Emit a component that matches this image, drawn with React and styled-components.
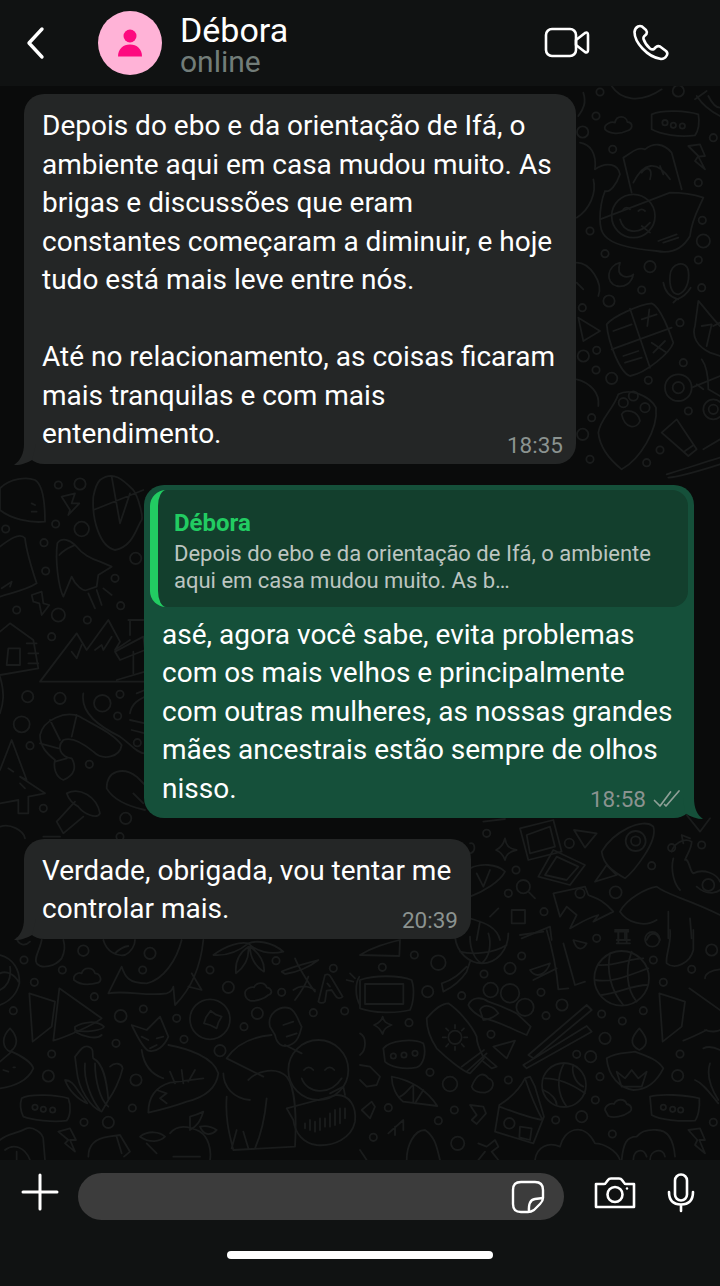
import React from 'react';
import styled, { createGlobalStyle } from 'styled-components';

const GlobalStyle = createGlobalStyle`
  html, body { margin: 0; padding: 0; background: #0a0b0b; }
  body { font-family: Roboto, "Liberation Sans", sans-serif; }
`;

// Wallpaper patches, drawn at 3x and scaled down: [left, top, shapes, dots]
const patches = [
  [0, 930, [
    'M0 75 C40 85 60 120 58 160 C50 195 25 215 0 225 M0 130 C20 120 45 135 55 155 M0 180 C20 170 35 150 30 110',
    'M125 30 C120 60 100 85 110 100 C125 118 165 110 185 85 C195 65 195 45 190 30',
    'M310 30 C320 65 350 80 375 75 C395 65 405 45 405 30 M345 70 C355 60 370 50 385 48 M50 25 C55 45 75 50 90 35',
    'M222 150 C218 135 235 125 245 130 C250 110 280 110 285 130 C300 130 308 150 295 158 C270 165 240 165 222 150 Z',
    'M735 190 C735 175 755 170 762 172 C770 155 795 155 800 172 C815 175 820 190 805 195 C795 205 770 215 750 212 C740 208 735 200 735 190 Z',
    'M325 190 L365 110 C375 140 385 160 440 160 C490 150 530 90 545 30 M325 190 C380 180 440 200 500 190 C515 185 520 170 520 170 L525 225 C560 190 600 130 610 30 M575 130 L605 180 L565 170',
    'M640 75 C680 45 720 35 745 40 C715 65 680 78 640 75 Z M745 40 C770 30 815 35 850 65 C810 75 770 65 745 40 Z M745 50 C715 70 705 100 708 130 C735 110 748 80 745 50 Z M750 50 C780 70 795 100 792 125 C765 110 750 80 750 50 Z',
    'M845 125 C875 110 920 100 955 90 C930 110 890 128 855 132 Z M885 85 C895 110 925 160 945 185 M880 180 C900 165 920 165 945 180 M885 210 C900 190 915 170 925 140',
    'M955 215 L975 135 C985 130 990 135 995 145 L1028 200 C1020 208 1010 205 1005 195 L995 180 L980 182 L975 215 C970 220 960 220 955 215 Z M982 160 L990 170',
    'M1040 150 L1060 155 M1050 130 L1065 145 M1078 140 C1065 160 1065 200 1080 225',
    'M88 190 L165 215 L155 290 L98 335 Z M178 175 L305 265 C280 285 200 320 160 332 Z',
    'M225 290 C250 275 290 270 312 290 C310 300 250 310 225 300 Z M225 305 C250 320 290 330 305 315',
    'M632 242 L648 254 L665 260 L655 278 L650 295 L630 285 L612 280 L618 262 Z',
    'M395 285 L440 300 L480 260 L505 320 C495 345 470 370 445 362 C425 350 410 315 395 285 Z M425 320 L445 330 M470 325 L490 320 M450 355 L470 345 M425 360 C430 395 445 430 490 445 M505 345 C560 355 640 380 655 430 C650 470 620 500 560 515 C520 530 480 540 445 548 C445 500 470 470 510 458 L610 445 M510 425 L525 460 M545 420 L550 460 M585 420 L565 455 M470 480 L500 490 L480 505 L500 520',
    'M225 380 C235 370 245 345 265 350 C285 355 275 375 280 385 C310 400 320 450 325 510 L305 545 C275 535 235 480 230 420 Z M255 400 C250 450 275 510 300 540 M285 400 C285 450 300 510 325 530 M195 450 C215 450 225 470 240 490 L262 520 C235 510 205 480 195 450 Z M330 410 C345 395 365 400 368 415 C360 450 340 490 325 510',
    'M65 505 C90 490 170 495 205 505 C215 530 210 560 200 572 C160 578 95 570 70 560 C60 540 60 520 65 505 Z',
    'M30 295 C50 315 60 345 30 365 C10 355 0 325 30 295 Z M0 395 L35 365 C70 380 95 400 100 415 C85 450 45 470 0 475 M10 420 L25 425 M40 412 h5',
    'M0 630 C25 610 40 615 80 595 C95 590 130 605 130 630 L135 690 M15 660 C40 640 75 650 90 690 M50 665 v25',
    'M175 605 L210 595 L228 630 L210 630 L225 665 L195 640 L205 630 Z',
    'M265 680 C265 640 290 625 325 620 L360 615 L390 665 L372 680 M350 620 L365 670',
    'M420 620 C445 600 480 605 495 620 C480 635 450 640 420 620 Z M440 640 L470 670 M510 610 C530 585 560 585 600 605 C625 620 635 660 630 690 M570 560 C590 555 600 550 610 545 C600 575 590 590 570 600 Z M600 590 C620 585 635 590 650 600 C630 620 610 615 600 590 Z M520 680 H600',
    'M810 290 C800 250 840 225 870 235 C890 245 895 275 905 290 C900 310 895 335 870 345 C845 355 830 340 825 315 Z M850 285 L880 275 M860 320 L890 310 M680 385 C710 340 760 320 815 315 M855 345 L905 370 M680 385 L790 440 M670 430 C670 470 700 505 750 510 M745 450 C775 420 830 410 860 440 C885 470 890 560 885 650 L700 660 C690 620 675 570 680 500 M800 505 C795 560 780 620 765 655 M710 600 L695 655 M730 605 L745 655',
    'M912 420 q14 -16 28 0 M975 420 q14 -16 28 0 M905 445 C920 490 990 500 1025 445 M990 490 L1030 470 L1035 495',
    'M860 535 L1010 495 C1050 495 1070 530 1065 575 C1055 625 1000 650 950 645 C910 640 885 610 880 570 Z',
    'M915 580 V595 M930 570 V600 M945 575 V605 M960 565 V600 M975 565 V590 M990 550 V590 M1005 540 V585 M1020 535 V580 M1035 535 V565',
  ], [
    [250, 62, 16], [72, 90, 11], [187, 120, 11], [103, 157, 11], [283, 200, 11], [40, 242, 11], [362, 258, 18], [430, 237, 11],
    [530, 265, 11], [552, 328, 11], [348, 340, 11], [155, 372, 11], [145, 438, 17], [408, 450, 17], [397, 534, 11], [252, 577, 11],
    [325, 577, 17], [660, 362, 17], [450, 70, 17], [428, 120, 11], [630, 120, 11], [685, 172, 17], [772, 250, 17], [732, 290, 11],
    [845, 187, 11], [828, 92, 11], [940, 248, 11], [1034, 243, 11], [1000, 115, 11], [630, 268, 60], [955, 420, 90],
    [105, 532, 8], [130, 538, 8], [158, 540, 8],
  ]],
  [360, 930, [
    'M0 75 C40 50 80 40 120 30 L118 78 Z',
    'M285 20 C290 70 330 100 365 100 C410 100 445 60 445 10 M330 20 C330 60 345 90 365 100 M385 10 C395 40 390 80 365 100 M300 65 C340 75 400 70 440 45 M330 95 L320 125 C300 155 280 170 250 185 L245 160 C280 150 300 130 320 110',
    'M0 150 C40 135 120 135 155 150 C165 180 160 220 150 240 C110 250 40 250 0 235 Z M15 162 H130 V222 H15 Z',
    'M200 265 C225 235 250 220 265 220 C295 240 335 285 350 320 C350 345 365 370 372 385 L330 430 C310 425 260 385 230 355 C210 325 200 295 200 265 Z M305 410 L372 360 M320 425 L380 370 M375 380 L410 410 L395 415 L370 395',
    'M285 285 V295 M285 350 V360 M248 322 H258 M312 322 H322 M258 295 L265 302 M305 342 L312 350 M312 295 L305 302 M265 342 L258 350',
    'M325 225 C335 200 365 200 385 215 C415 225 440 235 470 250 L512 290 L500 315 C460 300 410 270 370 265 C345 250 330 240 325 225 Z M360 240 C370 220 400 225 415 250 C400 262 380 270 370 270 Z',
    'M505 375 L680 225 L695 240 L520 385 Z M490 405 L680 288 L695 305 L500 415 Z',
    'M560 0 C575 50 590 120 595 178 L625 175 M610 40 L645 165 L675 155 M640 30 L680 40 C670 60 650 65 640 30 Z M510 120 L570 100 C560 130 530 150 510 120 Z M520 150 L590 115 M480 15 L550 5',
    'M715 105 C760 110 810 85 850 85 M705 150 C760 160 820 130 865 115 M725 195 C770 190 820 165 862 165 M750 70 C740 120 750 180 790 225 M815 65 C795 120 800 180 830 215',
    'M838 295 C860 320 870 345 838 360 C805 345 815 320 838 295 Z M740 385 C770 365 800 370 825 365 C850 375 890 385 910 415 C890 455 860 480 820 480 C780 475 745 440 740 385 Z M770 425 L795 445 L815 420 L835 445 L860 425 L845 470 H785 Z',
    'M898 190 L975 215 L965 290 L908 335 Z M988 175 L1080 240 M1035 300 C1060 310 1080 300 1080 300 M970 332 C1000 320 1020 310 1040 300',
    'M1030 355 C1050 345 1070 355 1080 360 M1050 400 C1040 430 1050 470 1075 510 M1005 450 C1030 460 1050 490 1075 520',
    'M555 445 C600 445 640 465 675 490 M612 400 C590 440 590 490 620 530 M550 480 C575 490 590 510 590 525 M640 405 C635 420 640 455 670 470',
    'M405 605 L418 525 C450 505 480 475 495 445 L510 440 L525 470 L552 560 L520 640 Z M418 530 C460 545 510 565 548 570 M495 445 C510 490 525 530 548 570 M480 590 L515 595 L510 630 L478 622 Z',
    'M95 440 C150 450 200 480 232 528 L130 515 C110 500 95 470 95 440 Z M160 465 V518 M190 480 L165 520 M120 500 C140 490 150 470 160 465',
    'M70 355 C90 330 160 325 190 340 C200 370 190 405 170 412 C130 420 90 410 75 395 Z',
    'M68 260 C70 275 80 280 95 285 C80 290 70 300 68 312 C62 300 55 290 42 285 C55 280 65 270 68 260 Z',
    'M400 350 L465 332 L440 385 Z M0 405 L30 410 L60 440 L50 465 L20 470 L0 450 M0 310 C20 320 20 360 0 375',
    'M335 470 C350 430 370 425 385 445 C405 450 405 480 375 488 C355 488 340 485 335 470 Z',
    'M870 500 C900 490 980 495 1018 505 C1020 530 1015 560 1005 572 C960 575 900 570 875 555 Z',
    'M735 540 C735 525 755 518 762 522 C770 505 795 505 800 522 C815 525 820 540 805 548 C790 560 760 565 745 558 Z',
    'M985 600 L1020 595 L1035 630 L1018 630 L1035 670 L1005 645 L1012 630 Z',
    'M525 690 C530 650 565 635 600 650 C610 600 670 570 705 640 C730 640 770 660 780 690',
    'M785 690 C790 640 800 620 830 620 C850 595 880 600 890 600 C920 600 940 620 945 680 M820 690 C820 660 850 650 860 680 M870 690 C870 660 910 650 915 680',
    'M140 690 C140 650 160 600 195 600 C225 620 230 650 240 690 M0 660 L20 690 M355 640 L380 650 L405 630 L415 650 L395 665 L415 690 M355 690 L375 665',
    'M85 610 L130 570 V600 M105 590 V615 M330 525 L370 530 L378 550 L350 582 L335 570 L350 555 Z M5 540 L35 515 L45 530 L30 565 Z',
    'M765 5 H805 M770 40 H810 M775 5 V40 M800 5 V40 M930 0 C935 40 915 80 920 100 C945 120 990 100 1000 60 L1000 0 M1035 145 C1035 130 1055 120 1080 118',
  ], [
    [235, 98, 22], [163, 75, 11], [67, 112, 11], [203, 185, 17], [305, 197, 11], [147, 278, 11], [393, 313, 11], [372, 132, 11],
    [450, 115, 17], [485, 78, 11], [543, 187, 11], [606, 225, 17], [558, 257, 11], [725, 252, 11], [787, 273, 11], [735, 325, 17],
    [650, 373, 11], [692, 380, 17], [720, 440, 11], [706, 510, 11], [270, 462, 22], [210, 427, 11], [445, 450, 11], [85, 533, 11],
    [283, 540, 11], [235, 572, 11], [665, 560, 17], [587, 570, 11], [40, 622, 11], [293, 640, 20], [757, 612, 11], [850, 242, 11],
    [910, 157, 11], [880, 90, 11], [995, 118, 11], [1055, 60, 17], [710, 25, 11], [877, 28, 22], [960, 372, 11], [953, 437, 17],
    [1060, 577, 11], [785, 145, 82], [612, 465, 66], [285, 322, 20], [392, 180, 22], [450, 190, 28], [495, 232, 26], [448, 580, 16],
    [100, 378, 8], [132, 375, 8], [165, 370, 8], [910, 532, 8], [938, 538, 8], [962, 540, 8],
  ]],
  [570, 86, [
    'M40 20 C50 50 40 70 25 90 M30 170 C60 175 80 200 75 250 M70 280 C80 320 60 370 20 395',
    'M245 85 C280 70 350 75 385 85 C390 110 385 135 375 148 C330 155 270 145 245 130 Z',
    'M105 130 C100 115 125 105 135 110 C140 85 170 90 172 108 C190 110 190 130 170 135 C150 145 120 145 105 130 Z',
    'M355 180 L390 175 L405 210 L385 212 L405 250 L375 225 L385 210 Z',
    'M160 215 C180 205 200 180 225 190 C250 170 280 170 305 200 M160 215 L185 320 M305 200 L335 310 M190 290 C220 230 260 220 300 280 M215 260 C230 240 250 245 240 280 M270 240 L280 265',
    'M90 400 C90 370 95 340 105 315 C120 320 140 295 150 265 C145 235 110 225 75 250 M300 320 C340 320 370 325 400 335 C385 370 365 400 360 450 C340 485 310 505 260 495 C200 490 130 480 105 450 C95 440 90 420 90 400 Z M265 465 L320 445 M280 470 L325 455',
    'M160 370 q10 -10 20 0 M205 375 q10 -10 20 0 M150 400 C160 440 205 450 240 410 M215 420 L240 440',
    'M150 530 C110 540 105 590 140 600 C165 605 185 590 190 565 C175 580 135 575 150 530 Z',
    'M300 570 C300 530 350 520 355 555 C360 590 345 620 325 625 C305 625 298 600 300 570 Z M280 590 C285 620 305 635 325 640 M362 605 C350 625 335 635 320 640 L310 650',
    'M450 720 C420 690 400 660 385 645 L375 720 C365 750 380 780 420 800 L450 810 M395 720 L425 715 L410 780 M430 720 L450 710 M25 695 L90 735 L40 765 Z',
    'M110 715 C130 690 210 655 245 652 C270 660 300 740 310 770 C300 800 230 860 180 870 C150 860 115 770 110 715 Z M180 668 L240 845 M125 790 L305 725 M130 735 L185 715 M215 700 L260 685 M238 670 L232 720 M245 770 L290 800 M285 765 L250 800 M160 810 L205 795 M165 830 L215 815',
    'M365 905 L450 870 M395 820 C410 840 415 880 415 910 L450 930 M380 895 L400 910',
    'M85 1040 C90 1000 130 970 145 925 C180 905 240 930 258 965 C265 1030 210 1120 155 1150 C130 1130 90 1090 85 1040 Z M155 985 C165 965 205 975 210 1005 C200 1030 165 1030 155 985 Z',
    'M275 1040 L320 1000 L380 1090 L355 1110 Z M345 1095 L370 1078',
    'M290 1165 C340 1150 400 1130 450 1115 M295 1175 C340 1170 400 1150 450 1135 M400 1090 L450 1060',
    'M20 880 C60 890 90 920 85 960 M20 530 C60 530 100 590 85 630 M20 590 L40 610',
    'M125 0 C150 40 210 55 275 10 M375 40 L410 15 M380 30 C400 60 430 80 450 90 M415 30 C430 60 440 65 450 65',
  ], [
    [38, 138, 17], [78, 90, 11], [90, 18, 11], [128, 190, 11], [60, 435, 11], [105, 503, 11], [240, 542, 17], [215, 612, 11],
    [117, 645, 17], [37, 665, 11], [330, 710, 11], [397, 403, 11], [400, 465, 20], [385, 522, 11], [395, 605, 11], [430, 155, 11],
    [385, 290, 11], [340, 830, 11], [325, 15, 17], [40, 810, 17], [80, 793, 11], [78, 852, 11], [125, 877, 17], [235, 883, 11],
    [65, 995, 11], [38, 1045, 17], [270, 1092, 11], [230, 1130, 11], [60, 1120, 11], [355, 975, 11], [190, 390, 65],
    [325, 905, 40], [325, 905, 17], [430, 970, 30], [430, 970, 14], [160, 950, 14], [190, 930, 14], [225, 965, 14],
    [285, 110, 8], [310, 118, 8], [337, 120, 8],
  ]],
  [0, 460, [
    'M0 85 C30 55 80 50 105 60 C130 75 135 130 135 185 C90 190 30 175 0 150 Z M95 130 L105 135 M95 155 L110 155',
    'M185 110 L225 100 L215 130 L238 130 L205 165 L210 150 Z',
    'M300 60 C340 30 370 60 400 90 C415 110 430 170 425 180 C410 200 400 260 345 270 C300 260 275 180 280 110 C285 85 290 70 300 60 Z M280 150 L430 90 M335 50 L360 190 L390 100',
    'M0 260 C25 240 60 215 75 235 C80 280 100 340 110 370 C80 390 30 400 0 410 M30 380 L35 365 L5 385',
    'M172 250 C185 230 210 240 225 255 C250 285 270 295 300 305 L335 320 L295 345 L290 380 L260 390 C250 395 225 375 215 350 L190 410 C175 380 165 300 172 250 Z M178 285 C195 265 215 260 225 255 M265 400 L285 445 M290 390 L305 435 M310 385 L335 405',
    'M95 405 L125 395 L130 430 L148 435 L125 465 L118 430 L100 425 Z',
    'M120 665 L230 520 L260 570 L325 480 L360 545 L345 570 L390 540 M215 575 L230 595 L245 555 M285 570 L305 555 L310 570 L335 530 M120 665 H435 M350 660 L435 635',
    'M385 480 H430 M390 480 V525 M400 575 V640 M345 575 L430 530 L435 570 L360 600 Z',
    'M0 515 L30 490 L100 540 L115 625 L0 645 M25 565 H60 V615 H20 Z M80 550 H110 M85 580 H115 M85 610 H115',
    'M120 825 C130 780 195 750 240 770 C290 800 340 820 365 855 C360 890 310 905 280 875 C250 850 215 830 190 840 C170 860 180 890 215 895 C230 920 225 945 190 960 C165 950 160 920 165 900 C140 880 120 860 120 825 Z M150 780 L180 840 M120 850 L175 865 M230 765 L215 830 M165 905 L200 895 M250 700 C240 760 300 800 360 830 C390 850 410 880 435 880',
    'M0 930 L35 840 L80 960 L60 950 L135 1000 L85 1010 L85 1060 H55 V1020 L0 1030 M25 925 L40 935 M60 970 L75 985',
    'M200 1000 C240 980 290 1010 300 1060 C290 1080 250 1060 235 1040 C215 1030 205 1015 200 1000 Z M225 1025 L170 1085 L190 1120 L250 1070',
    'M320 985 C320 930 370 920 410 950 L435 975 M320 985 C340 1020 390 1040 435 1050 M400 1000 L430 1030',
    'M410 700 L435 690 M390 760 C395 730 415 720 435 710 M390 780 L435 790 M395 810 L435 820',
    'M0 650 C15 700 10 730 0 760 M0 1100 C30 1090 70 1110 75 1135 M130 1130 L180 1130',
  ], [
    [175, 75, 11], [240, 72, 17], [167, 192, 11], [245, 207, 22], [132, 248, 11], [137, 333, 11], [50, 450, 11], [175, 465, 20],
    [262, 480, 11], [155, 530, 11], [407, 295, 17], [345, 355, 11], [362, 437, 11], [17, 207, 11], [83, 710, 17], [180, 715, 17],
    [307, 730, 25], [360, 703, 11], [353, 768, 11], [65, 793, 24], [90, 857, 11], [268, 913, 11], [412, 848, 11], [130, 1045, 11],
    [377, 1075, 17], [360, 1130, 11],
  ]],
  [470, 815, [
    'M150 40 L250 15 L275 110 L175 135 Z M170 60 L240 35 L255 95 L180 115 Z',
    'M205 185 L250 105 L345 150 L300 210 Z M225 180 L260 125 L325 155 L290 195 Z',
    'M395 110 C430 50 520 5 550 35 C565 80 490 170 465 190 C430 170 400 150 395 110 Z M375 200 L410 150 L440 180 Z',
    'M105 70 C108 90 115 100 140 105 C115 110 108 120 105 135 C100 120 90 110 78 105 C90 100 100 90 105 70 Z',
    'M312 45 L380 55 L345 98 Z',
    'M605 110 C610 90 640 65 665 80 C665 100 650 120 645 135 M660 70 L635 60 L640 85 M610 130 C600 170 615 210 630 225 M650 135 C660 145 660 170 670 175 C700 160 740 175 750 200 M680 215 C720 250 750 225 750 225',
    'M250 235 L345 215 L355 240 C375 250 395 250 430 290 L370 320 L385 300 C350 310 320 330 300 340 L320 300 L290 275 L270 305 Z',
    'M450 290 C470 250 530 220 560 215 C590 240 650 250 750 300 M450 290 C470 320 520 340 560 315 M595 290 V370 M660 310 L665 370',
    'M175 230 L195 250 M125 285 H165 V325 H125 Z',
    'M0 310 C30 320 80 330 90 375 M60 305 L85 280 M30 320 L20 375 M155 370 L240 335 L245 375',
    'M0 160 C30 145 80 145 105 170 C90 200 40 230 0 245 M20 175 L40 215 L60 165',
    'M0 85 C15 80 20 110 0 115 M40 20 L105 12 M650 0 L690 50 L720 10',
    'M435 345 H475 M440 375 H480 M445 345 V375 M465 345 V375 M530 375 C540 350 560 350 570 375',
  ], [
    [50, 55, 11], [138, 165, 11], [298, 85, 14], [545, 152, 11], [695, 90, 11], [115, 235, 11], [222, 290, 11], [437, 232, 18],
    [605, 98, 11], [497, 78, 30], [497, 78, 14], [160, 215, 20], [330, 235, 14], [715, 210, 18],
  ]],
];

const Wallpaper = () => (
  <Doodles viewBox="0 86 720 1074" aria-hidden="true">
    {patches.map(([left, top, shapes, dots], i) => (
      <g key={i} transform={`translate(${left} ${top}) scale(${1 / 3})`} fill="none" stroke="#1a1c1c" strokeWidth="5.4" strokeLinecap="round" strokeLinejoin="round">
        {shapes.map((d, j) => <path key={j} d={d} />)}
        {dots.map(([cx, cy, r], j) => <circle key={j} cx={cx} cy={cy} r={r} />)}
      </g>
    ))}
  </Doodles>
);

const Tail = ({ out }) => (
  <TailShape $out={out} viewBox="0 0 22 22" aria-hidden="true">
    {out
      ? <path d="M11 0 C11 10 14 17 20 21 C14 21 8 19 2 15 L0 0 Z" />
      : <path d="M10 0 C10 10 6 17 0 21 C6 21.5 13 19 18 16 L22 0 Z" />}
  </TailShape>
);

const App = () => (
  <Screen>
    <GlobalStyle />
    <Header>
      <BackButton>
        <svg width="22" height="34" viewBox="0 0 22 34" fill="none" stroke="#fff" strokeWidth="3.4" strokeLinecap="round" strokeLinejoin="round">
          <path d="M18 3 L5 17 L18 31" />
        </svg>
      </BackButton>
      <Avatar>
        <svg width="26" height="28" viewBox="0 0 26 28" fill="#fd0a7f">
          <circle cx="13" cy="7" r="6.5" />
          <path d="M1 27.5 C1 20 6 15.5 13 15.5 C20 15.5 25 20 25 27.5 Z" />
        </svg>
      </Avatar>
      <Contact>
        <ContactName>Débora</ContactName>
        <ContactStatus>online</ContactStatus>
      </Contact>
      <HeaderActions>
        <svg width="46" height="32" viewBox="0 0 46 32" fill="none" stroke="#fff" strokeWidth="2.6" strokeLinejoin="round">
          <rect x="2" y="2" width="30" height="27" rx="6" />
          <path d="M32 13 L41 6 Q44 4.5 44 8 V23 Q44 26.5 41 25 L32 18 Z" />
        </svg>
        <svg width="38" height="38" viewBox="0 0 38 38" fill="none" stroke="#fff" strokeWidth="2.6" strokeLinejoin="round">
          <path d="M6 2.5 Q3 4 2.5 8 C2.5 18 15 33 29 35 Q33 35 35 31 Q36 29 34 27 L28 22.5 Q26 21.5 24 23 L22 25 Q20 26 18 24.5 C15 22 12.5 18 11.5 15 Q11 13 13 11.5 L14.5 10 Q15.5 8 14 6 L10 2.5 Q8 1.5 6 2.5 Z" />
        </svg>
      </HeaderActions>
    </Header>

    <Chat>
      <Wallpaper />
      <Bubble>
        <Tail />
        <Text>
          Depois do ebo e da orientação de Ifá, o<br />
          ambiente aqui em casa mudou muito. As<br />
          brigas e discussões que eram<br />
          constantes começaram a diminuir, e hoje<br />
          tudo está mais leve entre nós.<br />
          <br />
          Até no relacionamento, as coisas ficaram<br />
          mais tranquilas e com mais<br />
          entendimento.
        </Text>
        <Meta><Time>18:35</Time></Meta>
      </Bubble>

      <Bubble $out>
        <Tail out />
        <Quote>
          <QuoteName>Débora</QuoteName>
          <QuoteText>
            Depois do ebo e da orientação de Ifá, o ambiente<br />
            aqui em casa mudou muito. As b…
          </QuoteText>
        </Quote>
        <Text $inset>
          asé, agora você sabe, evita problemas<br />
          com os mais velhos e principalmente<br />
          com outras mulheres, as nossas grandes<br />
          mães ancestrais estão sempre de olhos<br />
          nisso.
        </Text>
        <Meta>
          <Time>18:58</Time>
          <svg width="28" height="20" viewBox="0 0 28 20" fill="none" stroke="#8fa097" strokeWidth="1.7" strokeLinecap="round" strokeLinejoin="round">
            <path d="M1.5 11.5 L7 17 L17.5 3" />
            <path d="M11.5 15.5 L13 17 L26 2" />
          </svg>
        </Meta>
      </Bubble>

      <Bubble $narrow>
        <Tail />
        <Text>
          Verdade, obrigada, vou tentar me<br />
          controlar mais.
        </Text>
        <Meta><Time>20:39</Time></Meta>
      </Bubble>
    </Chat>

    <Footer>
      <InputRow>
        <svg width="38" height="38" viewBox="0 0 38 38" fill="none" stroke="#fff" strokeWidth="3" strokeLinecap="round">
          <path d="M19 2 V36 M2 19 H36" />
        </svg>
        <InputField>
          <svg width="34" height="34" viewBox="0 0 34 34" fill="none" stroke="#fff" strokeWidth="2.4" strokeLinejoin="round">
            <path d="M10 2 H24 Q32 2 32 10 V18 Q32 21 29 24 L23 30 Q20 32 17 32 H10 Q2 32 2 24 V10 Q2 2 10 2 Z" />
            <path d="M18 32 Q17 20 24 19 Q28 18.5 32 18" />
          </svg>
        </InputField>
        <InputIcons>
          <svg width="42" height="32" viewBox="0 0 42 32" fill="none" stroke="#fff" strokeWidth="2.6" strokeLinejoin="round">
            <path d="M2 7 H10 Q11.5 7 12.5 5 L14 3 Q15 1.5 17 1.5 H25 Q27 1.5 28 3 L29.5 5 Q30.5 7 32 7 H40 V30 H2 Z" />
            <circle cx="21" cy="17.5" r="7.5" />
            <circle cx="33" cy="11.5" r="1.2" fill="#fff" stroke="none" />
          </svg>
          <svg width="28" height="40" viewBox="0 0 28 40" fill="none" stroke="#fff" strokeWidth="2.6" strokeLinecap="round">
            <rect x="8" y="1.5" width="12" height="26" rx="6" />
            <path d="M2 19 Q2 31.5 14 31.5 Q26 31.5 26 19 M14 32 V38" />
          </svg>
        </InputIcons>
      </InputRow>
      <HomeBar />
    </Footer>
  </Screen>
);

const Screen = styled.div`
  width: 720px;
  height: 1286px;
  display: flex;
  flex-direction: column;
  overflow: hidden;
  background: #0a0b0b;
`;

const Header = styled.header`
  height: 86px;
  flex: none;
  display: flex;
  align-items: center;
  padding: 0 50px 0 24px;
  box-sizing: border-box;
  background: #101212;
`;

const BackButton = styled.div`
  width: 74px;
  height: 34px;
  flex: none;
  margin-top: -1px;
`;

const Avatar = styled.div`
  width: 64px;
  height: 64px;
  flex: none;
  margin-top: -1px;
  border-radius: 50%;
  background: #ffb3d7;
  display: flex;
  align-items: center;
  justify-content: center;
`;

const Contact = styled.div`
  margin: 4px 0 0 18px;
  flex: 1;
  display: flex;
  flex-direction: column;
`;

const ContactName = styled.div`
  color: #fff;
  font-size: 34px;
  line-height: 33px;
`;

const ContactStatus = styled.div`
  color: #727d79;
  font-size: 30px;
  line-height: 30px;
`;

const HeaderActions = styled.div`
  display: flex;
  align-items: center;
  gap: 42px;
`;

const Chat = styled.main`
  position: relative;
  flex: 1;
  display: flex;
  flex-direction: column;
  align-items: flex-start;
  padding: 8px 26px 0 24px;
  gap: 21px;
`;

const Doodles = styled.svg`
  position: absolute;
  top: 0;
  left: 0;
  width: 100%;
  height: 100%;
`;

const Bubble = styled.div`
  position: relative;
  box-sizing: border-box;
  width: ${p => (p.$narrow ? '447px' : p.$out ? '550px' : '552px')};
  align-self: ${p => (p.$out ? 'flex-end' : 'flex-start')};
  padding: ${p => (p.$out ? '5px 6px 9.5px' : '13px 18px 10px')};
  border-radius: 20px;
  background: ${p => (p.$out ? '#15503a' : '#242626')};
`;

const TailShape = styled.svg`
  position: absolute;
  bottom: -2px;
  width: 22px;
  height: 22px;
  ${p => (p.$out ? 'right: -11px;' : 'left: -10px;')}
  fill: ${p => (p.$out ? '#15503a' : '#242626')};
`;

const Text = styled.div`
  color: #fff;
  font-size: 28px;
  line-height: 38.5px;
  white-space: nowrap;
  padding-left: ${p => (p.$inset ? '12px' : '0')};
`;

const Meta = styled.div`
  position: absolute;
  right: 13px;
  bottom: 6px;
  display: flex;
  align-items: center;
  gap: 7px;
`;

const Time = styled.span`
  color: #8b9390;
  font-size: 22.5px;
  line-height: 26px;
`;

const Quote = styled.div`
  height: 117px;
  box-sizing: border-box;
  margin-bottom: 9px;
  padding: 20px 12px 0 16px;
  border-radius: 16px;
  border-left: 8px solid #22cc62;
  background: #133f2d;
`;

const QuoteName = styled.div`
  color: #22cc62;
  font-size: 24px;
  font-weight: 700;
  line-height: 26px;
  margin-bottom: 4px;
`;

const QuoteText = styled.div`
  color: #bdc5c1;
  font-size: 22px;
  line-height: 27px;
  white-space: nowrap;
`;

const Footer = styled.footer`
  height: 126px;
  flex: none;
  display: flex;
  flex-direction: column;
  align-items: center;
  box-sizing: border-box;
  background: #101212;
`;

const InputRow = styled.div`
  width: 100%;
  height: 60px;
  margin-top: 13px;
  display: flex;
  align-items: flex-start;
  padding: 0 20px 0 21px;
  box-sizing: border-box;
`;

const InputField = styled.div`
  width: 486px;
  height: 47px;
  margin-left: 19px;
  padding-right: 19px;
  box-sizing: border-box;
  display: flex;
  align-items: center;
  justify-content: flex-end;
  border-radius: 24px;
  background: #3c3c3c;
`;

const InputIcons = styled.div`
  margin-left: 30px;
  display: flex;
  align-items: center;
  gap: 31px;
`;

const HomeBar = styled.div`
  width: 266px;
  height: 8px;
  margin-top: 18px;
  border-radius: 4px;
  background: #fff;
`;

export default App;
